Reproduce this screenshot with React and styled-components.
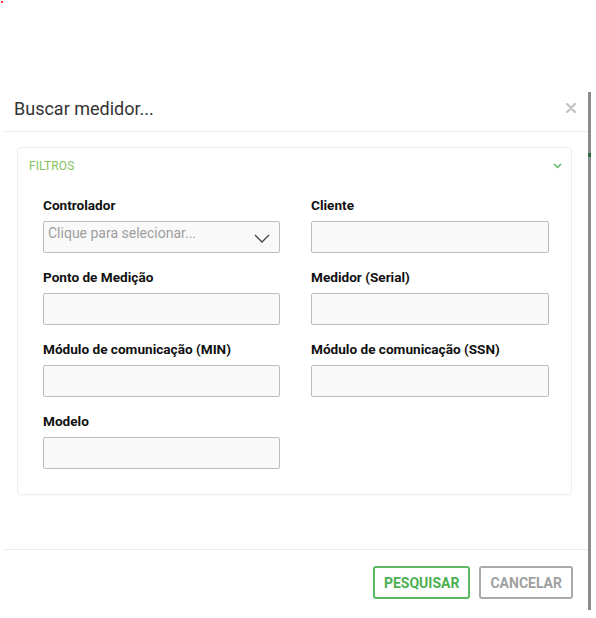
import styled, { createGlobalStyle } from "styled-components";

const GlobalStyle = createGlobalStyle`
  html, body {
    margin: 0;
    padding: 0;
    background: #ffffff;
    font-family: Roboto, "Liberation Sans", Arial, sans-serif;
  }
  * { box-sizing: border-box; }
`;

const fields = [
  { label: "Controlador", select: true },
  { label: "Cliente" },
  { label: "Ponto de Medição" },
  { label: "Medidor (Serial)" },
  { label: "Módulo de comunicação (MIN)" },
  { label: "Módulo de comunicação (SSN)" },
  { label: "Modelo" },
];

const App = () => {
  return (
    <>
      <GlobalStyle />
      <Page>
        <Dot />
        <Modal>
          <Header>
            <Title>Buscar medidor...</Title>
            <Close aria-label="fechar">
              <svg width="10" height="10" viewBox="0 0 10 10">
                <path d="M1 1 L9 9 M9 1 L1 9" stroke="#c4c4c4" strokeWidth="2.4" strokeLinecap="round" />
              </svg>
            </Close>
          </Header>
          <Body>
            <Card>
              <CardHeader>
                <CardTitle>FILTROS</CardTitle>
                <svg width="9" height="6" viewBox="0 0 9 6">
                  <path d="M1 1 L4.5 4.5 L8 1" stroke="#5cb860" strokeWidth="1.5" fill="none" />
                </svg>
              </CardHeader>
              <Form>
                {fields.map((f) => (
                  <Field key={f.label}>
                    <Label>{f.label}</Label>
                    {f.select ? (
                      <Select>
                        <Placeholder>Clique para selecionar...</Placeholder>
                        <svg width="16" height="9" viewBox="0 0 16 9">
                          <path d="M1 1 L8 8 L15 1" stroke="#444" strokeWidth="1.3" fill="none" />
                        </svg>
                      </Select>
                    ) : (
                      <Input />
                    )}
                  </Field>
                ))}
              </Form>
            </Card>
          </Body>
          <Footer>
            <Button $variant="primary">PESQUISAR</Button>
            <Button>CANCELAR</Button>
          </Footer>
        </Modal>
      </Page>
    </>
  );
};

const Page = styled.div`
  position: relative;
  width: 596px;
  height: 618px;
  padding-top: 92px;
  overflow: hidden;
`;

const Dot = styled.span`
  position: absolute;
  left: 1px;
  top: 1px;
  width: 2px;
  height: 2px;
  background: #ff3030;
`;

const Modal = styled.div`
  position: relative;
  margin-left: 4px;
  width: 587px;
  height: 518px;
  display: flex;
  flex-direction: column;
  background: #fff;
  border-right: 3px solid #8a8a8a;
  &::after {
    content: "";
    position: absolute;
    right: -3px;
    top: 61px;
    width: 3px;
    height: 4px;
    background: #2e6b3a;
  }
`;

const Header = styled.div`
  display: flex;
  align-items: flex-start;
  justify-content: space-between;
  padding: 6px 12px 0 10px;
  height: 40px;
  border-bottom: 1px solid #eeeeee;
`;

const Title = styled.h4`
  margin: 0;
  font-size: 18px;
  line-height: 21px;
  font-weight: 400;
  color: #333;
`;

const Close = styled.button`
  border: none;
  background: none;
  padding: 0;
  margin-top: 3px;
  cursor: pointer;
`;

const Body = styled.div`
  padding: 15px 16px 0 13px;
  height: 418px;
  border-bottom: 1px solid #eeeeee;
`;

const Card = styled.div`
  border: 1px solid #eeeeee;
  border-radius: 4px;
  box-shadow: 0 1px 1px rgba(0, 0, 0, 0.03);
`;

const CardHeader = styled.div`
  display: flex;
  align-items: center;
  justify-content: space-between;
  padding: 10px 9px 10px 11px;
  height: 36px;
`;

const CardTitle = styled.span`
  font-size: 12px;
  color: #85c25e;
  letter-spacing: 0.1px;
`;

const Form = styled.div`
  display: grid;
  grid-template-columns: 237px 238px;
  column-gap: 31px;
  row-gap: 16px;
  padding: 13px 0 25px 25px;
`;

const Field = styled.div`
  display: flex;
  flex-direction: column;
  gap: 8px;
`;

const Label = styled.label`
  font-size: 13.6px;
  line-height: 16px;
  font-weight: 700;
  color: #111;
`;

const Input = styled.div`
  height: 32px;
  background: #f9f9f9;
  border: 1px solid #bdbdbd;
  border-radius: 2px;
`;

const Select = styled(Input)`
  display: flex;
  align-items: center;
  justify-content: space-between;
  padding: 0 9px 0 4px;
  svg { margin-top: 3px; }
`;

const Placeholder = styled.span`
  font-size: 14px;
  color: #9e9e9e;
  margin-top: -8px;
`;

const Footer = styled.div`
  display: flex;
  justify-content: flex-end;
  gap: 9px;
  padding: 16px 15px 0 0;
`;

const Button = styled.button`
  height: 33px;
  padding: 0 9px;
  background: #fff;
  border: 2px solid ${(p) => (p.$variant === "primary" ? "#5cb860" : "#aaaaaa")};
  border-radius: 3px;
  color: ${(p) => (p.$variant === "primary" ? "#4caf50" : "#a0a0a0")};
  font-family: Roboto, "Liberation Sans", Arial, sans-serif;
  font-size: 14px;
  font-weight: 700;
  cursor: pointer;
`;

export default App;
